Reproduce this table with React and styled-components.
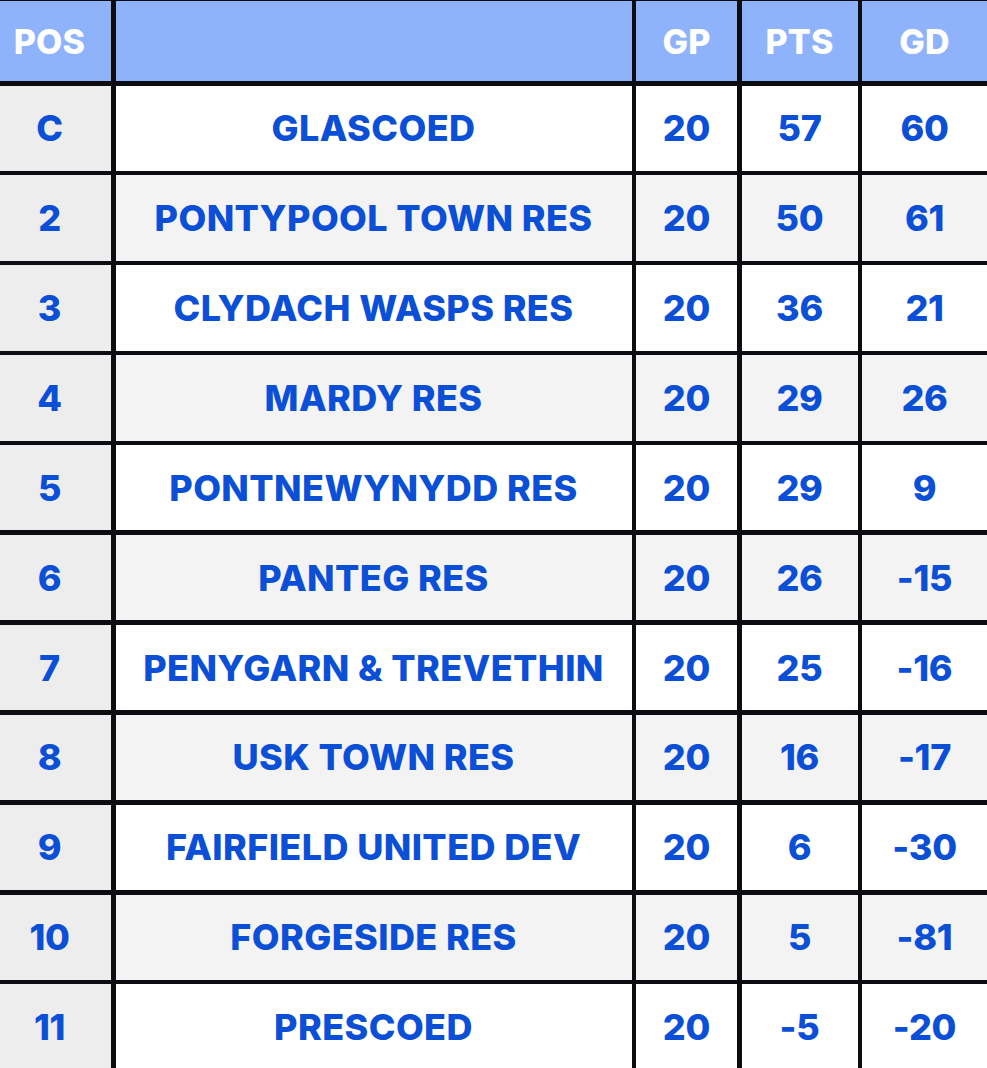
import styled, { createGlobalStyle } from "styled-components";

const GlobalStyle = createGlobalStyle`
  html, body {
    margin: 0;
    padding: 0;
    background: #0b0d10;
  }
  body {
    font-family: Inter, "Open Sans", "Liberation Sans", sans-serif;
  }
`;

const Table = styled.div`
  display: grid;
  grid-template-columns: 111px 516px 101px 116px 1fr;
  grid-template-rows: 80px;
  grid-auto-rows: 85.4px;
  column-gap: 4.5px;
  row-gap: 4.5px;
  width: 987px;
  height: 1068px;
  overflow: hidden;
  background: #0b0d10;
  padding-top: 1px;
  box-sizing: border-box;
`;

const HeadCell = styled.div`
  display: flex;
  align-items: center;
  justify-content: center;
  padding-right: ${(p) => (p.$pos ? "12px" : "0")};
  background: #8fb3fb;
  color: #ffffff;
  font-weight: 800;
  font-size: 34px;
  letter-spacing: 0.2px;
`;

const Cell = styled.div`
  display: flex;
  align-items: center;
  justify-content: center;
  padding-right: ${(p) => (p.$pos ? "12px" : "0")};
  background: ${(p) => (p.$pos ? "#ededed" : p.$alt ? "#f3f3f3" : "#ffffff")};
  color: #0b4fd6;
  font-weight: 800;
  font-size: 36px;
  letter-spacing: ${(p) => (p.$name ? "0.4px" : "-0.3px")};
  white-space: nowrap;
`;

const rows = [
  ["C", "GLASCOED", 20, 57, 60],
  ["2", "PONTYPOOL TOWN RES", 20, 50, 61],
  ["3", "CLYDACH WASPS RES", 20, 36, 21],
  ["4", "MARDY RES", 20, 29, 26],
  ["5", "PONTNEWYNYDD RES", 20, 29, 9],
  ["6", "PANTEG RES", 20, 26, -15],
  ["7", "PENYGARN & TREVETHIN", 20, 25, -16],
  ["8", "USK TOWN RES", 20, 16, -17],
  ["9", "FAIRFIELD UNITED DEV", 20, 6, -30],
  ["10", "FORGESIDE RES", 20, 5, -81],
  ["11", "PRESCOED", 20, -5, -20],
];

export default function App() {
  return (
    <>
      <GlobalStyle />
      <Table>
        <HeadCell $pos>POS</HeadCell>
        <HeadCell />
        <HeadCell>GP</HeadCell>
        <HeadCell>PTS</HeadCell>
        <HeadCell>GD</HeadCell>
        {rows.map(([pos, name, gp, pts, gd], i) => {
          const alt = i % 2 === 1;
          return [
            <Cell key={`p${i}`} $pos>{pos}</Cell>,
            <Cell key={`n${i}`} $name $alt={alt}>{name}</Cell>,
            <Cell key={`g${i}`} $alt={alt}>{gp}</Cell>,
            <Cell key={`t${i}`} $alt={alt}>{pts}</Cell>,
            <Cell key={`d${i}`} $alt={alt}>{gd}</Cell>,
          ];
        })}
      </Table>
    </>
  );
}
